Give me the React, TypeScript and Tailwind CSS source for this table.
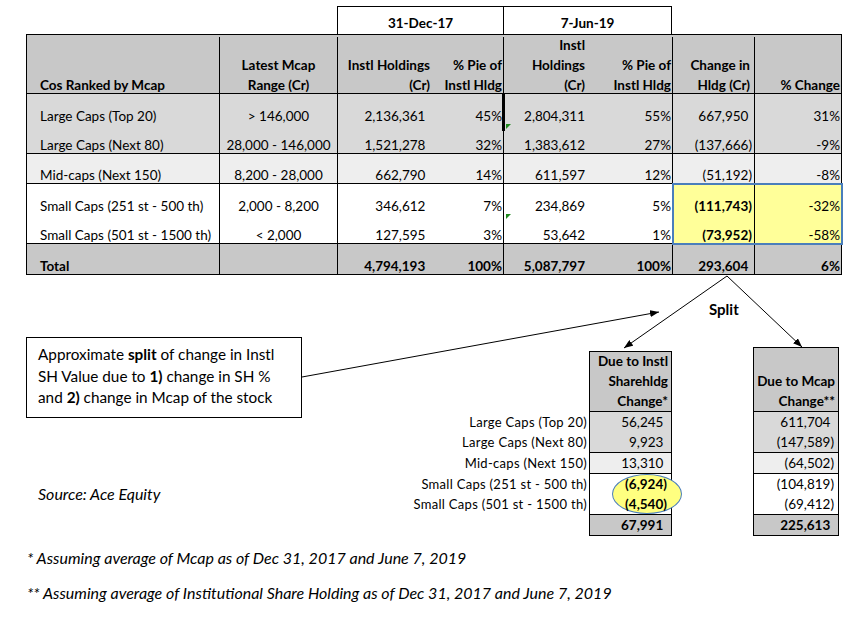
import React from "react";

type Row = {
  label: string;
  range: string;
  h1: string;
  p1: string;
  h2: string;
  p2: string;
  ch: string;
  pc: string;
};

const rows: Row[] = [
  { label: "Large Caps (Top 20)", range: "> 146,000", h1: "2,136,361", p1: "45%", h2: "2,804,311", p2: "55%", ch: "667,950", pc: "31%" },
  { label: "Large Caps (Next 80)", range: "28,000 - 146,000", h1: "1,521,278", p1: "32%", h2: "1,383,612", p2: "27%", ch: "(137,666)", pc: "-9%" },
  { label: "Mid-caps (Next 150)", range: "8,200 - 28,000", h1: "662,790", p1: "14%", h2: "611,597", p2: "12%", ch: "(51,192)", pc: "-8%" },
  { label: "Small Caps (251 st - 500 th)", range: "2,000 - 8,200", h1: "346,612", p1: "7%", h2: "234,869", p2: "5%", ch: "(111,743)", pc: "-32%" },
  { label: "Small Caps (501 st - 1500 th)", range: "< 2,000", h1: "127,595", p1: "3%", h2: "53,642", p2: "1%", ch: "(73,952)", pc: "-58%" },
  { label: "Total", range: "", h1: "4,794,193", p1: "100%", h2: "5,087,797", p2: "100%", ch: "293,604", pc: "6%" },
];

const groups = [
  { bg: "bg-[#d9d9d9] h-[60px] border-b", idx: [0, 1], yellow: false, bold: false },
  { bg: "bg-[#eeeeee] h-[30px] border-b", idx: [2], yellow: false, bold: false },
  { bg: "bg-white h-[60px] border-b", idx: [3, 4], yellow: true, bold: false },
  { bg: "bg-[#c8c8c8] h-[30px]", idx: [5], yellow: false, bold: true },
];

// accounting style: positives keep room for the closing paren
const Acct = ({ v }: { v: string }) => (
  <span>
    {v}
    {!v.startsWith("(") && <span className="invisible">)</span>}
  </span>
);

const splitRows = [
  { label: "Large Caps (Top 20)", a: "56,245", b: "611,704" },
  { label: "Large Caps (Next 80)", a: "9,923", b: "(147,589)" },
  { label: "Mid-caps (Next 150)", a: "13,310", b: "(64,502)" },
  { label: "Small Caps (251 st - 500 th)", a: "(6,924)", b: "(104,819)" },
  { label: "Small Caps (501 st - 1500 th)", a: "(4,540)", b: "(69,412)" },
];

const splitGroups = [
  { bg: "bg-[#d9d9d9]", idx: [0, 1] },
  { bg: "bg-[#eeeeee]", idx: [2] },
  { bg: "bg-white", idx: [3, 4] },
];

const cell = "flex items-end h-full leading-[16px] whitespace-nowrap";

const DataRow = ({ r, yellow, bold }: { r: Row; yellow: boolean; bold: boolean }) => (
  <div className={`flex flex-1 ${bold ? "font-bold" : ""}`}>
    <div className={`${cell} w-[193px] border-r border-black pl-[13px]`}>{r.label}</div>
    <div className={`${cell} w-[118px] border-r border-black justify-center`}>{r.range}</div>
    <div className={`${cell} w-[93px] justify-end pr-[2px]`}><Acct v={r.h1} /></div>
    <div className={`${cell} w-[73px] border-r border-black justify-end pr-[1px]`}>{r.p1}</div>
    <div className={`${cell} w-[84px] justify-end pr-[3px]`}>{r.h2}</div>
    <div className={`${cell} w-[85px] border-r border-black justify-end pr-[1px]`}>{r.p2}</div>
    <div className={`${cell} w-[82px] border-r border-black justify-end pr-[2px] ${yellow ? "bg-[#ffff99] font-bold" : ""}`}>
      <Acct v={r.ch} />
    </div>
    <div className={`${cell} w-[86px] justify-end pr-[1px] ${yellow ? "bg-[#ffff99]" : ""}`}>{r.pc}</div>
  </div>
);

const hcell = "flex flex-col justify-end h-full leading-[20px] whitespace-nowrap translate-y-[2px]";

const SplitTable = ({ head, k, width, top, headH }: { head: string[]; k: "a" | "b"; width: string; top: string; headH: string }) => (
  <div className={`${width} ${top} border border-black`}>
    <div className={`${headH} flex flex-col justify-end leading-[20px] whitespace-nowrap bg-[#c8c8c8] border-b border-black font-bold text-right pr-[3px]`}>
      {head.map((h) => (
        <div key={h}>{h}</div>
      ))}
    </div>
    {splitGroups.map((g, gi) => (
      <div key={gi} className={`relative border-b border-black ${g.bg}`}>
        {k === "a" && gi === 2 && (
          <div className="absolute left-[22px] top-[0px] w-[70px] h-[40px] rounded-[50%] bg-[#ffff80] border border-[#4a7ebb]" />
        )}
        {g.idx.map((i) => (
          <div
            key={i}
            className={`relative h-[20px] leading-[20px] text-right pr-[4px] ${k === "a" && gi === 2 ? "font-bold" : ""}`}
          >
            <Acct v={splitRows[i][k]} />
          </div>
        ))}
      </div>
    ))}
    <div className="h-[20px] leading-[20px] text-right pr-[4px] bg-[#c8c8c8] font-bold">
      <Acct v={k === "a" ? "67,991" : "225,613"} />
    </div>
  </div>
);

export default function App() {
  return (
    <div className="relative w-[867px] h-[617px] bg-white text-black font-['Lato',sans-serif] text-[13.5px] overflow-hidden">
      {/* date header */}
      <div className="flex mt-[6px] ml-[337px] w-[335px] h-[28px] border-t border-l border-r border-black font-bold">
        <div className="w-[166px] border-r border-black flex items-center justify-center pt-[6px]">31-Dec-17</div>
        <div className="flex-1 flex items-center justify-center pt-[6px]">7-Jun-19</div>
      </div>

      {/* main table */}
      <div className="relative ml-[26px] w-[816px] border border-black">
        <div className="flex h-[59px] bg-[#c8c8c8] border-b border-black font-bold">
          <div className={`${hcell} w-[193px] border-r border-black pl-[13px]`}>Cos Ranked by Mcap</div>
          <div className={`${hcell} w-[118px] border-r border-black text-center`}>
            <div>Latest Mcap</div>
            <div>Range (Cr)</div>
          </div>
          <div className={`${hcell} w-[93px] text-right pr-[1px]`}>
            <div>Instl Holdings</div>
            <div>(Cr)</div>
          </div>
          <div className={`${hcell} w-[73px] border-r border-black text-right pr-[1px]`}>
            <div>% Pie of</div>
            <div>Instl Hldg</div>
          </div>
          <div className={`${hcell} w-[84px] text-right pr-[3px]`}>
            <div>Instl</div>
            <div>Holdings</div>
            <div>(Cr)</div>
          </div>
          <div className={`${hcell} w-[85px] border-r border-black text-right pr-[1px]`}>
            <div>% Pie of</div>
            <div>Instl Hldg</div>
          </div>
          <div className={`${hcell} w-[82px] border-r border-black text-right pr-[4px]`}>
            <div>Change in</div>
            <div>Hldg (Cr)</div>
          </div>
          <div className={`${hcell} w-[86px] text-right pr-[1px]`}>% Change</div>
        </div>
        {groups.map((g, gi) => (
          <div key={gi} className={`flex flex-col border-black ${g.bg}`}>
            {g.idx.map((i) => (
              <DataRow key={i} r={rows[i]} yellow={g.yellow} bold={g.bold} />
            ))}
          </div>
        ))}

        {/* selection marks */}
        <div className="absolute left-[475px] top-[59px] w-[3px] h-[37px] bg-black" />
        <div className="absolute left-[479px] top-[89px] w-0 h-0 border-t-[5px] border-t-[#1f8a1f] border-r-[5px] border-r-transparent" />
        <div className="absolute left-[479px] top-[179px] w-0 h-0 border-t-[5px] border-t-[#1f8a1f] border-r-[5px] border-r-transparent" />
        <div className="absolute left-[645px] top-[148px] w-[171px] h-[62px] border-2 border-[#4a7ebb]" />
      </div>

      {/* split label */}
      <div className="h-[62px] pl-[709px] pt-[25px] text-[15px] font-bold leading-[18px]">Split</div>

      {/* lower area */}
      <div className="flex items-start">
        <div className="w-[302px] pl-[26px] shrink-0">
          <div className="w-[276px] h-[81px] border border-black pl-[11px] pt-[6px] text-[15.3px] leading-[21.5px] whitespace-nowrap">
            <div>
              Approximate <b>split</b> of change in Instl
            </div>
            <div>
              SH Value due to <b>1)</b> change in SH %
            </div>
            <div>
              and <b>2)</b> change in Mcap of the stock
            </div>
          </div>
          <div className="mt-[66px] pl-[12px] text-[16px] italic leading-[20px]">Source: Ace Equity</div>
        </div>

        <div className="w-[285px] mt-[75px] shrink-0 text-right text-[13px] tracking-[0.3px]">
          {splitGroups.map((g, gi) => (
            <div key={gi} className="border-b border-transparent">
              {g.idx.map((i) => (
                <div key={i} className="h-[20px] leading-[20px] whitespace-nowrap">
                  {splitRows[i].label}
                </div>
              ))}
            </div>
          ))}
        </div>

        <div className="ml-[2px]">
          <SplitTable head={["Due to Instl", "Sharehldg", "Change*"]} k="a" width="w-[83px]" top="mt-[14px]" headH="h-[60px]" />
        </div>
        <div className="ml-[81px]">
          <SplitTable head={["Due to Mcap", "Change**"]} k="b" width="w-[86px]" top="mt-[10px]" headH="h-[64px]" />
        </div>
      </div>

      {/* footnotes */}
      <div className="pl-[27px] mt-[12px] text-[16px] italic leading-[20px]">
        <div>* Assuming average of Mcap as of Dec 31, 2017 and June 7, 2019</div>
        <div className="mt-[15px]">** Assuming average of Institutional Share Holding as of Dec 31, 2017 and June 7, 2019</div>
      </div>

      {/* arrows */}
      <svg className="absolute inset-0 pointer-events-none" width="867" height="617">
        <defs>
          <marker id="ah" markerWidth="9" markerHeight="7" refX="9" refY="3.5" orient="auto" markerUnits="userSpaceOnUse">
            <path d="M0,0 L9,3.5 L0,7 z" fill="#000" />
          </marker>
        </defs>
        <line x1="727" y1="276" x2="624" y2="348" stroke="#000" strokeWidth="1" markerEnd="url(#ah)" />
        <line x1="727" y1="276" x2="802" y2="347" stroke="#000" strokeWidth="1" markerEnd="url(#ah)" />
        <line x1="302" y1="377" x2="659" y2="312" stroke="#000" strokeWidth="1" markerEnd="url(#ah)" />
      </svg>
    </div>
  );
}
